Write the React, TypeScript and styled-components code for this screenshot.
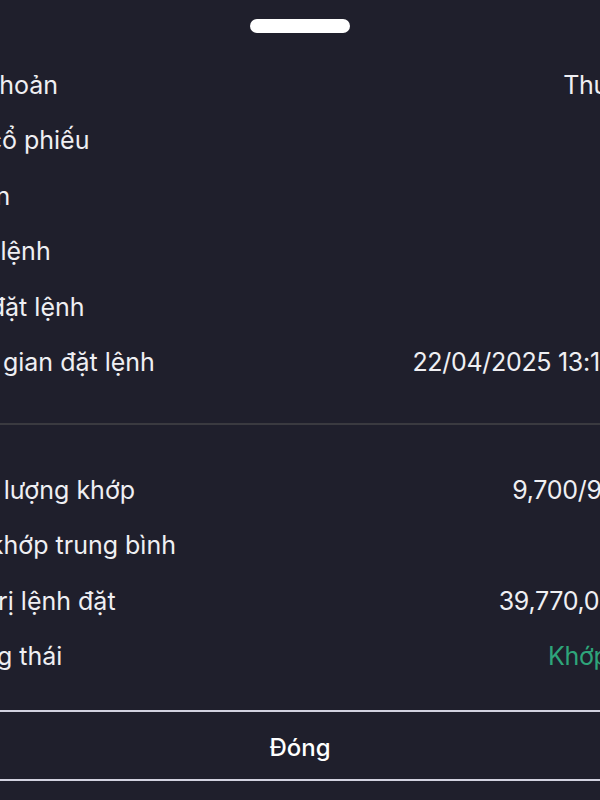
import React from "react";
import styled, { createGlobalStyle } from "styled-components";

const Global = createGlobalStyle`
  html, body { margin: 0; padding: 0; background: #1f1f2c; }
  body { font-family: Inter, "Noto Sans", "Liberation Sans", sans-serif; }
`;

const Viewport = styled.div`
  width: 600px;
  height: 800px;
  overflow: hidden;
  background: #1f1f2c;
`;

const Sheet = styled.div`
  width: 708px;
  margin-left: -56px;
  display: flex;
  flex-direction: column;
`;

const HandleBar = styled.div`
  align-self: center;
  width: 100px;
  height: 14px;
  margin: 19px 0 0 4px;
  border-radius: 7px;
  background: #ffffff;
`;

const Section = styled.div<{ $top: number }>`
  display: flex;
  flex-direction: column;
  margin-top: ${(p) => p.$top}px;
`;

const Row = styled.div`
  height: 55.5px;
  display: flex;
  align-items: center;
  justify-content: space-between;
  font-size: 25px;
  color: #efeff3;
`;

const Label = styled.span`
  white-space: nowrap;
`;

const Value = styled.span<{ $color?: string }>`
  white-space: nowrap;
  letter-spacing: -0.3px;
  color: ${(p) => p.$color ?? "#efeff3"};
`;

const Divider = styled.div`
  height: 2px;
  margin-top: 33px;
  background: #3a3a40;
`;

const CloseButton = styled.button`
  margin-top: 26px;
  height: 71px;
  border: 2px solid #d2d2e0;
  border-left: none;
  border-right: none;
  background: transparent;
  color: #ffffff;
  font-family: inherit;
  font-size: 24px;
  font-weight: 500;
  padding: 4px 0 0 4px;
`;

const orderRows = [
  { label: "Tài khoản", value: "Thường" },
  { label: "Mã cổ phiếu", value: "ITA" },
  { label: "Phiên", value: "LO" },
  { label: "Loại lệnh", value: "Mua" },
  { label: "Giá đặt lệnh", value: "4.10" },
  { label: "Thời gian đặt lệnh", value: "22/04/2025 13:15:20" },
];

const matchRows: { label: string; value: string; color?: string }[] = [
  { label: "Khối lượng khớp", value: "9,700/9,700" },
  { label: "Giá khớp trung bình", value: "4.10" },
  { label: "Giá trị lệnh đặt", value: "39,770,000 đ" },
  { label: "Trạng thái", value: "Khớp hết", color: "#2ea57a" },
];

export default function App() {
  return (
    <Viewport>
      <Global />
      <Sheet>
        <HandleBar />
        <Section $top={24}>
          {orderRows.map((r) => (
            <Row key={r.label}>
              <Label>{r.label}</Label>
              <Value>{r.value}</Value>
            </Row>
          ))}
        </Section>
        <Divider />
        <Section $top={37}>
          {matchRows.map((r) => (
            <Row key={r.label}>
              <Label>{r.label}</Label>
              <Value $color={r.color}>{r.value}</Value>
            </Row>
          ))}
        </Section>
        <CloseButton>Đóng</CloseButton>
      </Sheet>
    </Viewport>
  );
}
